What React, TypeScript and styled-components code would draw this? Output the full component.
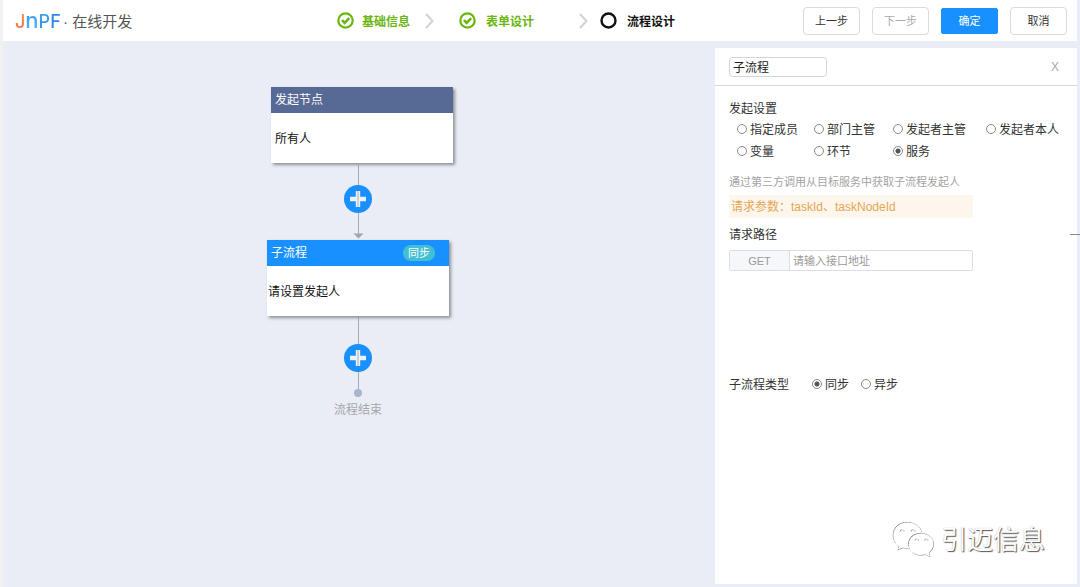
import React, { useState } from "react";
import styled, { createGlobalStyle, css } from "styled-components";

const GlobalStyle = createGlobalStyle`
  *, *::before, *::after { box-sizing: border-box; }
  body {
    margin: 0;
    background: #eaedf5;
    color: #333;
    font: 12px/18px "Liberation Sans", "Noto Sans CJK SC", sans-serif;
  }
  button, input { font-family: inherit; }
`;

const Page = styled.div`
  display: flex;
  flex-direction: column;
  min-height: 100vh;
  padding-right: 3px;
  border-left: 3px solid #f1f1f2;
`;

const Header = styled.header`
  display: flex;
  align-items: center;
  height: 41px;
  padding: 0 10px 0 12px;
  background: #fff;
`;

const Brand = styled.div`
  display: flex;
  align-items: center;
  flex: 0 0 322px;
  height: 24px;
`;

const Logo = styled.span`
  display: flex;
  align-items: baseline;
  width: 48px;
  font: 500 18px/24px Inter, sans-serif;
`;

const LogoLetter = styled.span<{ $from: string; $to: string; $size?: number }>`
  font-size: ${(p) => p.$size ?? 18}px;
  color: transparent;
  background: linear-gradient(${(p) => p.$from}, ${(p) => p.$to});
  background-clip: text;
`;

const Product = styled.span`
  padding-top: 2px;
  font-size: 15px;
  line-height: 24px;
  color: #555;
  white-space: pre;
`;

const Steps = styled.ol`
  display: flex;
  align-items: center;
  margin: 0;
  padding: 0;
  list-style: none;
`;

const Step = styled.li<{ $done?: boolean; $wide?: boolean }>`
  display: flex;
  align-items: center;
  gap: ${(p) => (p.$wide ? 10 : 8)}px;
  font-weight: 700;
  white-space: nowrap;
  color: ${(p) => (p.$done ? "#6ab60d" : "#111")};
`;

const StepText = styled.span`
  padding-top: 2px;
`;

const Separator = styled.li<{ $before: number; $after: number }>`
  display: flex;
  margin: 0 ${(p) => p.$after}px 0 ${(p) => p.$before}px;
`;

const Actions = styled.div`
  display: flex;
  align-items: center;
  gap: 12px;
  margin-left: auto;
`;

const Button = styled.button<{ $primary?: boolean }>`
  width: 57px;
  height: 28px;
  padding: 0;
  border: 1px solid #dcdcde;
  border-radius: 4px;
  background: #fff;
  color: #333;
  font-size: 11px;
  line-height: 16px;
  cursor: pointer;
  &:disabled { color: #aaa; cursor: default; }
  ${(p) =>
    p.$primary &&
    css`
      height: 26px;
      border-color: #1890ff;
      border-radius: 2px;
      background: #1890ff;
      color: #fff;
    `}
`;

const Main = styled.main`
  display: flex;
  flex: 1;
`;

const Canvas = styled.section`
  flex: 1;
  min-width: 186px;
  padding-top: 46px;
`;

const Board = styled.div`
  position: relative;
  width: 186px;
  height: 340px;
  margin: 0 auto;
`;

const Node = styled.article<{ $x: number; $y: number }>`
  position: absolute;
  left: ${(p) => p.$x}px;
  top: ${(p) => p.$y}px;
  width: 182px;
  background: #fff;
  box-shadow: 2px 2px 3px #8c9097;
`;

const NodeTitle = styled.h2<{ $color: string }>`
  display: flex;
  align-items: center;
  justify-content: space-between;
  height: 26px;
  margin: 0;
  padding: 0 14px 0 4px;
  background: ${(p) => p.$color};
  color: #fff;
  font-size: 12px;
  font-weight: 400;
`;

const NodeBody = styled.p<{ $inset: number }>`
  margin: 0;
  padding: 17px ${(p) => p.$inset}px 15px;
  color: #111;
`;

const Tag = styled.span`
  padding: 0 5px;
  border-radius: 8px;
  background: #43bfd5;
  font-size: 11px;
  line-height: 16px;
`;

const Connector = styled.svg<{ $y: number }>`
  position: absolute;
  left: 86px;
  top: ${(p) => p.$y}px;
`;

const AddButton = styled.button<{ $y: number }>`
  position: absolute;
  left: 78px;
  top: ${(p) => p.$y}px;
  width: 28px;
  height: 28px;
  padding: 0;
  border: 0;
  border-radius: 50%;
  background: #1890ff;
  cursor: pointer;
  svg { display: block; }
`;

const EndLabel = styled.span`
  position: absolute;
  top: 314px;
  left: 0;
  width: 184px;
  text-align: center;
  color: #a5a7ab;
`;

const Panel = styled.aside`
  position: relative;
  flex: 0 0 362px;
  margin: 7px 0 3px;
  background: #fff;
`;

const PanelHeader = styled.div`
  display: flex;
  align-items: center;
  justify-content: space-between;
  height: 38px;
  padding: 0 16px 0 14px;
  border-bottom: 1px solid #d6d9da;
`;

const NameInput = styled.input`
  width: 98px;
  height: 20px;
  padding: 0 3px;
  border: 1px solid #d3d6d7;
  border-radius: 4px;
  color: #222;
  font-size: 12px;
`;

const Close = styled.button`
  padding: 0;
  border: 0;
  background: none;
  color: #aaa;
  font-size: 12px;
  line-height: 18px;
  width: 12px;
  cursor: pointer;
`;

const Form = styled.form`
  padding: 14px 14px 0;
`;

const Group = styled.fieldset`
  margin: 0;
  padding: 0;
  border: 0;
`;

const Legend = styled.legend`
  padding: 0;
`;

const RadioGrid = styled.div`
  display: grid;
  grid-template-columns: 77px 79px 93px 1fr;
  row-gap: 4px;
  margin-top: 3px;
  padding-left: 8px;
`;

const RadioLabel = styled.label`
  display: flex;
  align-items: center;
  gap: 3px;
  white-space: nowrap;
`;

const Radio = styled.input`
  appearance: none;
  flex: none;
  width: 10px;
  height: 10px;
  margin: 0 0 2px;
  border: 1px solid #8a8a8a;
  border-radius: 50%;
  background: #fff;
  &:checked { background: radial-gradient(circle, #555 0 2px, #fff 3px); }
`;

const Hint = styled.p`
  margin: 12px 0 4px;
  font-size: 11px;
  color: #a3a3a3;
`;

const Notice = styled.p`
  width: 244px;
  margin: 0 0 8px;
  padding: 3px 2px 2px;
  background: #fdf6ec;
  color: #e6a756;
`;

const PathLabel = styled.label`
  display: block;
`;

const PathRow = styled.div`
  display: flex;
  width: 244px;
  height: 21px;
  margin-top: 6px;
  border: 1px solid #dcdee2;
  border-radius: 2px;
`;

const Method = styled.span`
  width: 60px;
  border-right: 1px solid #dcdee2;
  background: #f5f7fa;
  color: #999;
  font-size: 11px;
  line-height: 20px;
  text-align: center;
`;

const PathInput = styled.input`
  flex: 1;
  min-width: 0;
  padding: 1px 3px 0;
  border: 0;
  background: none;
  font-size: 11px;
  &::placeholder { color: #999; }
`;

const TypeGroup = styled(Group)`
  display: flex;
  align-items: center;
  gap: 12px;
  margin-top: 105px;
`;

const TypeLabel = styled.span`
  width: 71px;
`;

const Watermark = styled.div`
  position: absolute;
  right: 32px;
  bottom: 25px;
  display: flex;
  align-items: center;
  gap: 6px;
  color: #fff;
  font-size: 26px;
  line-height: 38px;
  text-shadow: 1px 1px 1px #555, 0 0 1px #aaa;
`;

const Handle = styled.span`
  position: absolute;
  right: -3px;
  top: 186px;
  width: 10px;
  height: 1px;
  background: #888;
`;

const DoneIcon = () => (
  <svg width="17" height="17" viewBox="0 0 17 17" fill="none" stroke="#6ab60d" aria-hidden="true">
    <circle cx="8.5" cy="8.5" r="7.2" strokeWidth="2.2" />
    <path d="M5 8.2l2.6 2.6 4.6-4.6" strokeWidth="2.6" />
  </svg>
);

const CurrentIcon = () => (
  <svg width="17" height="17" viewBox="0 0 17 17" fill="none" stroke="#111" aria-hidden="true">
    <circle cx="8.5" cy="8.5" r="7" strokeWidth="2.4" />
  </svg>
);

const Chevron = () => (
  <svg width="9" height="16" viewBox="0 0 9 16" fill="none" stroke="#d2d2d2" strokeWidth="2" aria-hidden="true">
    <path d="M1 1l6.5 7L1 15" />
  </svg>
);

const PlusIcon = () => (
  <svg width="28" height="28" viewBox="0 0 28 28" aria-hidden="true">
    <path d="M11.8 6h4.4v5.8H22v4.4h-5.8V22h-4.4v-5.8H6v-4.4h5.8z" fill="#eef2f7" />
    <path d="M14 6v16" stroke="#b4b9c0" strokeWidth="1.2" />
  </svg>
);

const WeChatIcon = () => {
  const bubbles = (
    <>
      <path d="M7 25.5C3 23 .8 19 .8 14.500 .8 7 7 1 15.500 1c7 0 12.700 4.400 14 10.500-8 .5-13.500 5.500-13.500 11.800 0 1.500.2 2.700.6 3.900-2 .2-3.800-.1-5.600-.6L5.500 29z" />
      <path d="M29 12c7 0 12.500 4.800 12.500 11 0 3.700-1.700 6.700-4.700 8.700l1.200 4.100-4.500-2.400C24.500 36 16.200 31 16.200 23.200 16.200 17 22 12 29 12z" />
      <path d="M8 10.500a2 2 0 0 1 4 0M19 10.500a2 2 0 0 1 4 0M23 19.500a1.700 1.700 0 0 1 3.400 0M32.500 19.500a1.700 1.700 0 0 1 3.400 0" />
    </>
  );
  return (
    <svg width="43" height="38" viewBox="0 0 43 38" fill="none" aria-hidden="true">
      <g stroke="#8b8b8b" strokeWidth="1">{bubbles}</g>
      <g stroke="#fff" strokeWidth="1" transform="translate(-.6 -.6)">{bubbles}</g>
    </svg>
  );
};

const STARTERS = ["指定成员", "部门主管", "发起者主管", "发起者本人", "变量", "环节", "服务"];
const TYPES = ["同步", "异步"];

export default function App() {
  const [name, setName] = useState("子流程");
  const [starter, setStarter] = useState("服务");
  const [type, setType] = useState("同步");

  return (
    <>
      <GlobalStyle />
      <Page>
        <Header>
          <Brand>
            <Logo>
              <LogoLetter $from="#f79a3b" $to="#f4603c">J</LogoLetter>
              <LogoLetter $from="#2f8df0" $to="#4dbcf7" $size={22}>n</LogoLetter>
              <LogoLetter $from="#3ea6f5" $to="#2f86ea">P</LogoLetter>
              <LogoLetter $from="#2f86ea" $to="#2f86ea">F</LogoLetter>
            </Logo>
            <Product>· 在线开发</Product>
          </Brand>
          <Steps>
            <Step $done><DoneIcon /><StepText>基础信息</StepText></Step>
            <Separator $before={15} $after={25}><Chevron /></Separator>
            <Step $done $wide><DoneIcon /><StepText>表单设计</StepText></Step>
            <Separator $before={45} $after={12}><Chevron /></Separator>
            <Step $wide><CurrentIcon /><StepText>流程设计</StepText></Step>
          </Steps>
          <Actions>
            <Button type="button">上一步</Button>
            <Button type="button" disabled>下一步</Button>
            <Button type="button" $primary>确定</Button>
            <Button type="button">取消</Button>
          </Actions>
        </Header>
        <Main>
          <Canvas>
            <Board>
              <Connector $y={76} width="12" height="76" aria-hidden="true">
                <path d="M6.500 2v70" stroke="#a9abae" />
                <path d="M1.500 70.500h10l-5 5z" fill="#a3a5a8" />
              </Connector>
              <Connector $y={229} width="12" height="84" aria-hidden="true">
                <path d="M6.500 0v76" stroke="#a9abae" />
                <circle cx="6" cy="77" r="4" fill="#a9b4cd" />
              </Connector>
              <Node $x={5} $y={0}>
                <NodeTitle $color="#576a95">发起节点</NodeTitle>
                <NodeBody $inset={4}>所有人</NodeBody>
              </Node>
              <AddButton $y={98} type="button" aria-label="添加节点"><PlusIcon /></AddButton>
              <Node $x={1} $y={153}>
                <NodeTitle $color="#1890ff">子流程<Tag>同步</Tag></NodeTitle>
                <NodeBody $inset={1}>请设置发起人</NodeBody>
              </Node>
              <AddButton $y={257} type="button" aria-label="添加节点"><PlusIcon /></AddButton>
              <EndLabel>流程结束</EndLabel>
            </Board>
          </Canvas>
          <Panel>
            <PanelHeader>
              <NameInput aria-label="节点名称" value={name} onChange={(e) => setName(e.target.value)} />
              <Close type="button" aria-label="关闭">X</Close>
            </PanelHeader>
            <Form>
              <Group>
                <Legend>发起设置</Legend>
                <RadioGrid>
                  {STARTERS.map((s) => (
                    <RadioLabel key={s}>
                      <Radio type="radio" name="starter" checked={starter === s} onChange={() => setStarter(s)} />
                      {s}
                    </RadioLabel>
                  ))}
                </RadioGrid>
              </Group>
              <Hint>通过第三方调用从目标服务中获取子流程发起人</Hint>
              <Notice>请求参数：taskId、taskNodeId</Notice>
              <PathLabel htmlFor="path">请求路径</PathLabel>
              <PathRow>
                <Method>GET</Method>
                <PathInput id="path" type="text" placeholder="请输入接口地址" />
              </PathRow>
              <TypeGroup aria-labelledby="flow-type">
                <TypeLabel id="flow-type">子流程类型</TypeLabel>
                {TYPES.map((t) => (
                  <RadioLabel key={t}>
                    <Radio type="radio" name="type" checked={type === t} onChange={() => setType(t)} />
                    {t}
                  </RadioLabel>
                ))}
              </TypeGroup>
            </Form>
            <Handle />
            <Watermark><WeChatIcon />引迈信息</Watermark>
          </Panel>
        </Main>
      </Page>
    </>
  );
}
